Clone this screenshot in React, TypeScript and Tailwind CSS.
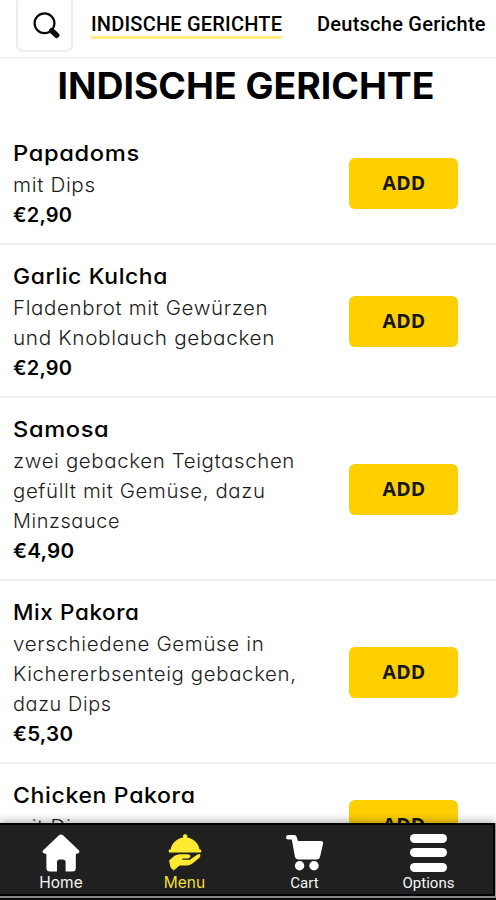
import React from "react";

type Line = { text: string; cls: string };
type Dish = { name: Line; lines: Line[]; price: Line };

const dishes: Dish[] = [
  {
    name: { text: "Papadoms", cls: "scale-x-[1.077]" },
    lines: [{ text: "mit Dips", cls: "scale-x-[1.06]" }],
    price: { text: "€2,90", cls: "scale-x-[1.025]" },
  },
  {
    name: { text: "Garlic Kulcha", cls: "scale-x-[1.04]" },
    lines: [
      { text: "Fladenbrot mit Gewürzen", cls: "scale-x-[1.05]" },
      { text: "und Knoblauch gebacken", cls: "scale-x-[1.063]" },
    ],
    price: { text: "€2,90", cls: "scale-x-[1.025]" },
  },
  {
    name: { text: "Samosa", cls: "scale-x-[1.073]" },
    lines: [
      { text: "zwei gebacken Teigtaschen", cls: "scale-x-[1.048]" },
      { text: "gefüllt mit Gemüse, dazu", cls: "scale-x-[1.046]" },
      { text: "Minzsauce", cls: "scale-x-[1.02]" },
    ],
    price: { text: "€4,90", cls: "scale-x-[1.06]" },
  },
  {
    name: { text: "Mix Pakora", cls: "scale-x-[1.02]" },
    lines: [
      { text: "verschiedene Gemüse in", cls: "scale-x-[1.053]" },
      { text: "Kichererbsenteig gebacken,", cls: "scale-x-[1.047]" },
      { text: "dazu Dips", cls: "scale-x-[1.02]" },
    ],
    price: { text: "€5,30", cls: "scale-x-[1.055]" },
  },
  {
    name: { text: "Chicken Pakora", cls: "scale-x-[1.048]" },
    lines: [{ text: "mit Dips", cls: "scale-x-[1.06]" }],
    price: { text: "€4,90", cls: "scale-x-[1.06]" },
  },
];

function DishRow({ dish }: { dish: Dish }) {
  return (
    <li className="flex items-center justify-between border-b-2 border-[#efefef] pt-3.5 pr-[38px] pb-[13px] pl-[13px]">
      <div className="flex flex-col items-start whitespace-nowrap text-black">
        <h2 className={"origin-left text-[22px] leading-[34px] font-medium tracking-[0.6px] " + dish.name.cls}>
          {dish.name.text}
        </h2>
        {dish.lines.map((l) => (
          <p
            key={l.text}
            className={"origin-left text-[19.5px] leading-[30px] font-light tracking-[0.6px] text-[#1c1c1c] " + l.cls}
          >
            {l.text}
          </p>
        ))}
        <p className={"origin-left text-[19.5px] leading-[30px] font-semibold tracking-[0.2px] " + dish.price.cls}>
          {dish.price.text}
        </p>
      </div>
      <button className="h-[51px] w-[109px] shrink-0 rounded-[6px] bg-[#fed000] pb-px pl-px font-['Open_Sans',sans-serif] text-[19.5px] font-bold tracking-[0.3px] text-[#161616]">
        ADD
      </button>
    </li>
  );
}

function HomeIcon() {
  return (
    <svg viewBox="0 0 38 38" className="h-[38px] w-[38px]" fill="#fff">
      <path d="M17.2 1.1Q19 -.2 20.8 1.1L37 16.6Q38.3 18.7 35.6 19.6L33.8 20V34Q33.8 37.6 30.4 37.6H23.6V28.2Q23.6 25.4 20.8 25.4H17.8Q15 25.4 15 28.2V37.6H8Q4.4 37.6 4.4 34V20L2.4 19.6Q-.3 18.7 1 16.6Z" />
    </svg>
  );
}

function MenuIcon() {
  return (
    <svg viewBox="0 0 34 38" className="h-[38px] w-[34px]" fill="#ffe932">
      <path d="M15 2.2C15 -.4 19.4 -.4 19.4 2.2L19.2 3.6C25.6 4.8 31 9.8 31.6 16.2H2.6C3.2 9.8 8.6 4.8 15.2 3.6Z" />
      <rect x="0.8" y="15.4" width="32.4" height="3.2" rx="1.2" />
      <path d="M1 26.5 6.6 21.8Q9 20.2 12 20.2H19.8Q22.6 20.4 22.4 22.5Q22.1 24.4 19.4 24.4H14.4V25.8H21.8L29 20.8Q31.8 19.3 32.4 21.1Q32.7 22.4 31.2 24L23.8 30Q21.8 31.4 19.2 31.4H11.6L5.6 36.6 2.6 33.4Z" />
    </svg>
  );
}

function CartIcon() {
  return (
    <svg viewBox="0 0 38 36" className="h-9 w-[38px]" fill="#fff">
      <path d="M2.2 0H8.4Q10 .1 10.6 1.8L12 6H34.8Q37.5 6.1 37.1 8.4L34 22Q33.5 24.4 31 24.4H12.2Q9.6 24.4 9 22L5.8 4.6H2.2Q0 4.4 0 2.3Q.1 .1 2.2 0Z" />
      <circle cx="13.6" cy="30.8" r="4.7" />
      <circle cx="28" cy="30.8" r="4.7" />
    </svg>
  );
}

function BarsIcon() {
  return (
    <span className="flex h-[38px] w-[37px] flex-col justify-between">
      <span className="h-[9px] rounded-full bg-white" />
      <span className="h-[9px] rounded-full bg-white" />
      <span className="h-[9px] rounded-full bg-white" />
    </span>
  );
}

function Tab({ icon, label, cls }: { icon: React.ReactNode; label: string; cls: string }) {
  return (
    <div className={"flex shrink-0 flex-col items-center whitespace-nowrap " + cls}>
      <span className="flex h-[39px] items-center">{icon}</span>
      <span className="mt-px leading-5">{label}</span>
    </div>
  );
}

export default function App() {
  return (
    <div className="relative h-[900px] w-[496px] overflow-hidden bg-white font-[Inter,sans-serif] [font-feature-settings:'cv11']">
      <header className="flex h-[59px] items-start border-b-2 border-[#f2f2f2] pl-4 font-[Roboto,sans-serif] text-[20px] font-medium whitespace-nowrap text-black">
        <div className="-mt-1 flex h-14 w-[57px] shrink-0 items-center justify-center rounded-[7px] border-2 border-[#ededed]">
          <svg viewBox="0 0 27 27" className="mt-[3px] ml-[3px] h-[27px] w-[27px]" fill="none" stroke="#0a0a0a">
            <circle cx="11.5" cy="11.2" r="9.9" strokeWidth="2.3" />
            <path d="M17.2 17.2 20 20" strokeWidth="3.6" />
            <path d="M18.8 18.8 23.6 23.2" strokeWidth="5.6" strokeLinecap="round" />
          </svg>
        </div>
        <span className="mt-[13px] ml-[18px] h-[26px] w-[191px] border-b-[3px] border-[#ffeb88] leading-[23px] tracking-[0.2px]">
          INDISCHE GERICHTE
        </span>
        <span className="mt-[13px] ml-[35px] leading-[23px] tracking-[0.25px]">Deutsche Gerichte</span>
      </header>

      <h1 className="h-[63px] scale-x-[1.024] pt-[7px] pr-1 text-center text-[36.5px] leading-[40px] font-bold whitespace-nowrap text-black">
        INDISCHE GERICHTE
      </h1>

      <ul>
        {dishes.map((d) => (
          <DishRow key={d.name.text} dish={d} />
        ))}
      </ul>

      <div className="absolute inset-x-0 bottom-0 h-[77px] bg-[#0a0a0a] shadow-[0_-2px_8px_rgba(0,0,0,0.3)]">
        <div className="border-r border-[#999999] bg-black">
          <nav className="flex h-[73px] w-[495px] border-2 border-l-0 border-black bg-[#202020] pt-[8px] text-[#f4f4f4]">
            <Tab icon={<HomeIcon />} label="Home" cls="w-[122px] text-[15.5px]" />
            <Tab icon={<MenuIcon />} label="Menu" cls="w-[125px] text-[15.5px] text-[#f5df35]" />
            <Tab icon={<CartIcon />} label="Cart" cls="w-[115px] font-[Roboto,sans-serif] text-[15px]" />
            <Tab icon={<BarsIcon />} label="Options" cls="w-[133px] font-[Roboto,sans-serif] text-[15px]" />
          </nav>
        </div>
        <div className="h-[2px] bg-[#888888]" />
      </div>
    </div>
  );
}
